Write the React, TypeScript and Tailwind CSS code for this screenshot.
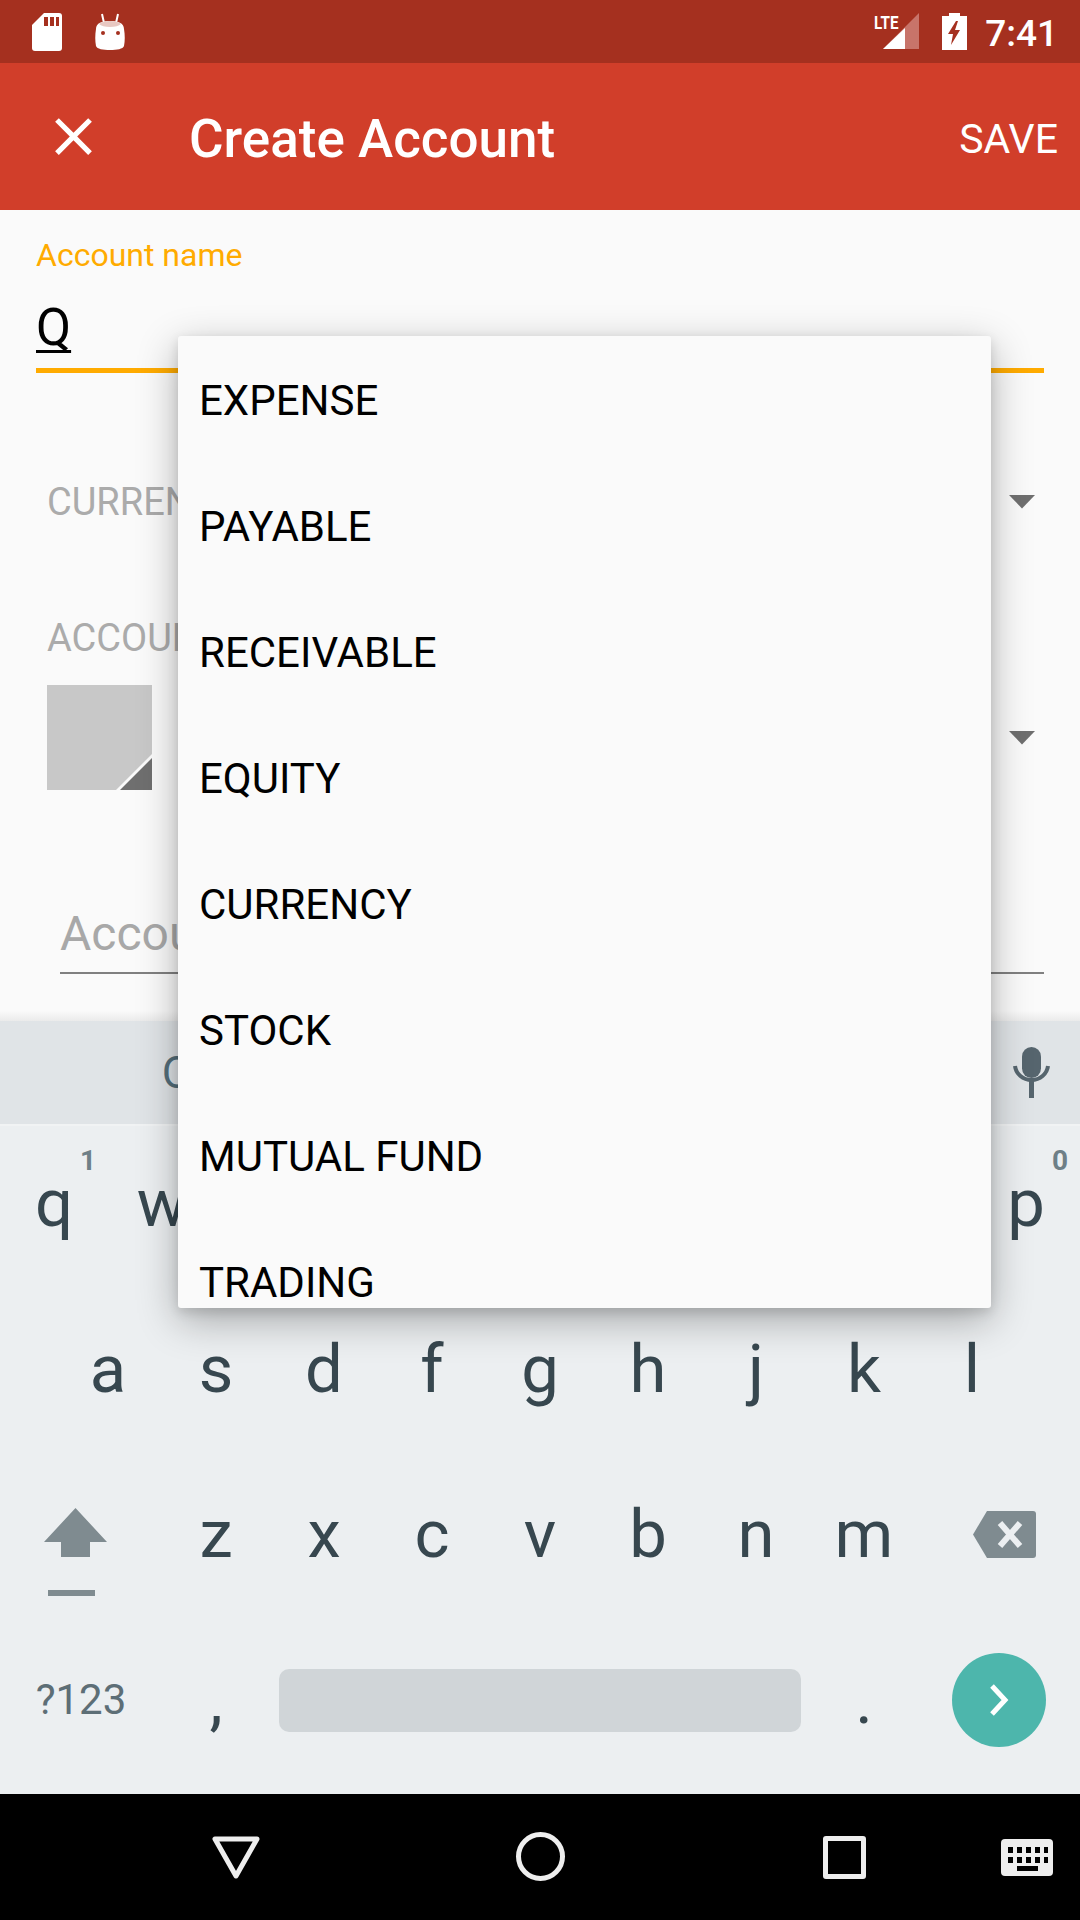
const accountTypes = ["EXPENSE", "PAYABLE", "RECEIVABLE", "EQUITY", "CURRENCY", "STOCK", "MUTUAL FUND", "TRADING"];

function KeyLetter({ label, hint }: { label: string; hint?: string }) {
  return (
    <div className="relative w-[108px] h-full flex items-center justify-center text-[67px] leading-none text-[#37474f]">
      {label}
      {hint && (
        <span className="absolute right-[12px] top-[26px] text-[28px] font-bold leading-none text-[#6e7f87]">{hint}</span>
      )}
    </div>
  );
}

function Caret() {
  return (
    <svg width="26" height="14" viewBox="0 0 26 14" className="shrink-0">
      <path d="M0 0h26L13 13.5z" fill="#6f6f6f" />
    </svg>
  );
}

function StatusBar() {
  return (
    <div className="h-[63px] bg-[#a5301f] flex items-center pl-[32px] pr-[22px] text-white">
      <svg width="30" height="38" viewBox="0 0 30 38">
        <path d="M12 0h15a3 3 0 0 1 3 3v32a3 3 0 0 1-3 3H3a3 3 0 0 1-3-3V12z" fill="#fff" />
        <path d="M12 4h4v9h-4zM18 4h4v9h-4zM24 4h3v9h-3z" fill="#a5301f" />
      </svg>
      <svg width="32" height="38" viewBox="0 0 32 38" className="ml-[32px]">
        <path d="M8 1l2 9M24 1l-2 9" stroke="#fff" strokeWidth="2" />
        <path d="M2 16c0-6 6-8 14-8s14 2 14 8c1 6 1 12 0 17-1 3-7 4-14 4s-13-1-14-4c-1-5-1-11 0-17z" fill="#fff" />
        <path d="M5 11c2-2 6-3 11-3s9 1 11 3c-2 2-6 3-11 3s-9-1-11-3z" fill="#e8c8c2" />
        <circle cx="9" cy="20" r="2" fill="#a5301f" />
        <circle cx="24" cy="20" r="2" fill="#a5301f" />
      </svg>
      <div className="ml-auto flex items-center">
        <div className="relative w-[46px] h-[38px]">
          <span className="absolute left-0 top-0 text-[19px] leading-none font-bold scale-x-[0.8] origin-left">LTE</span>
          <svg width="37" height="37" viewBox="0 0 37 37" className="absolute left-[9px] top-0">
            <path d="M36 0v36H0z" fill="#c8746a" />
            <path d="M22 15v21H0z" fill="#fff" />
          </svg>
        </div>
        <svg width="25" height="37" viewBox="0 0 25 37" className="ml-[22px]">
          <path d="M7 0h11v3h7v34H0V3h7z" fill="#fff" />
          <path d="M14 8L6 21h5l-2 11 9-15h-5l3-9z" fill="#a5301f" />
        </svg>
        <span className="ml-[18px] pt-[3px] text-[37px] font-medium leading-none">7:41</span>
      </div>
    </div>
  );
}

function AppBar() {
  return (
    <div className="h-[147px] bg-[#d13e2a] flex items-center text-white">
      <svg width="63" height="63" viewBox="0 0 24 24" fill="#fff" className="ml-[42px]">
        <path d="M19 6.41L17.59 5 12 10.59 6.41 5 5 6.41 10.59 12 5 17.59 6.41 19 12 13.41 17.59 19 19 17.59 13.41 12z" />
      </svg>
      <h1 className="ml-[84px] pt-[5px] text-[53px] font-medium leading-none">Create Account</h1>
      <span className="ml-auto mr-[22px] pt-[5px] text-[41px] leading-none">SAVE</span>
    </div>
  );
}

function Form() {
  return (
    <div className="h-[811px] bg-[#fafafa] relative">
      <div className="pt-[29px] px-[36px]">
        <label className="block text-[32px] leading-[32px] text-[#ffab00]">Account name</label>
        <div className="mt-[26px] h-[76px] border-b-[5px] border-[#ffab00] text-[51px] leading-[62px] text-black">
          <span className="underline decoration-[3px] underline-offset-[5px] [text-decoration-skip-ink:none]">Q</span>
        </div>
      </div>
      <div className="mt-[109px] pl-[47px] pr-[45px] flex items-center justify-between">
        <span className="text-[38px] leading-[40px] text-[#ababab]">CURRENCY</span>
        <Caret />
      </div>
      <div className="mt-[96px] pl-[47px] text-[38px] leading-[40px] text-[#ababab]">ACCOUNT TYPE</div>
      <div className="mt-[27px] pl-[47px] pr-[45px] flex items-center justify-between">
        <div className="relative w-[105px] h-[105px] bg-[#c8c8c8] overflow-hidden">
          <svg width="36" height="36" viewBox="0 0 36 36" className="absolute right-0 bottom-0">
            <path d="M36 0v36H0z" fill="#fafafa" />
            <path d="M36 4v32H4z" fill="#6f6f6f" />
          </svg>
        </div>
        <Caret />
      </div>
      <div className="mt-[128px] mx-[36px] ml-[60px] h-[56px] border-b-[2px] border-[#808080] text-[48px] leading-[32px] text-[#a8a8a8]">
        Account description
      </div>
      <div className="absolute left-0 right-0 bottom-0 h-[10px] bg-gradient-to-b from-transparent to-[#ebebeb]" />
    </div>
  );
}

function Keyboard() {
  return (
    <div className="h-[773px] bg-[#eceff1] flex flex-col">
      <div className="h-[105px] shrink-0 bg-[#e0e4e7] border-b-[2px] border-[#f1f3f4] flex items-center relative">
        <span className="ml-[162px] text-[44px] leading-none text-[#546e7a]">Q</span>
        <svg width="37" height="51" viewBox="0 0 37 51" className="absolute left-[1013px] top-[26px]">
          <rect x="9" y="0" width="19" height="31" rx="9.5" fill="#56656e" />
          <path d="M2 19c1 8 8 14 16.500 14S34 27 35 19" stroke="#56656e" strokeWidth="4" fill="none" />
          <rect x="16" y="33" width="5" height="18" fill="#56656e" />
        </svg>
      </div>
      <div className="flex-1 flex flex-col -mt-[5px] pb-[11px]">
        <div className="flex-1 flex">
          {"qwertyuiop".split("").map((c, i) => (
            <KeyLetter key={c} label={c} hint={i === 0 ? "1" : i === 9 ? "0" : undefined} />
          ))}
        </div>
        <div className="flex-1 flex pl-[54px]">
          {"asdfghjkl".split("").map((c) => (
            <KeyLetter key={c} label={c} />
          ))}
        </div>
        <div className="flex-1 flex">
          <div className="w-[162px] h-full flex flex-col items-center justify-center pr-[12px] pt-[35px]">
            <svg width="63" height="49" viewBox="0 0 63 49">
              <path d="M31.500 0L63 34H46v15H17V34H0z" fill="#7f8b90" />
            </svg>
            <div className="mt-[33px] mr-[8px] w-[47px] h-[6px] bg-[#7f8b90]" />
          </div>
          {"zxcvbnm".split("").map((c) => (
            <KeyLetter key={c} label={c} />
          ))}
          <div className="w-[162px] h-full flex items-center justify-end pr-[44px]">
            <svg width="63" height="47" viewBox="0 0 63 47">
              <path d="M14 0h46a3 3 0 0 1 3 3v41a3 3 0 0 1-3 3H14L0 23.500z" fill="#7f8b90" />
              <path d="M27 12l20 23M47 12L27 35" stroke="#eceff1" strokeWidth="6" />
            </svg>
          </div>
        </div>
        <div className="flex-1 flex items-center">
          <div className="w-[162px] flex justify-center text-[42px] leading-none text-[#5d6e76]">?123</div>
          <div className="w-[108px] flex justify-center text-[67px] leading-none text-[#37474f]">,</div>
          <div className="w-[540px] px-[9px]">
            <div className="h-[63px] rounded-[10px] bg-[#d0d5d8]" />
          </div>
          <div className="w-[108px] flex justify-center text-[67px] leading-none text-[#37474f]">.</div>
          <div className="w-[162px] flex justify-center">
            <div className="w-[94px] h-[94px] rounded-full bg-[#4db6ac] flex items-center justify-center">
              <svg width="20" height="32" viewBox="0 0 20 32">
                <path d="M3 2l13 14L3 30" stroke="#fff" strokeWidth="5" fill="none" />
              </svg>
            </div>
          </div>
        </div>
      </div>
    </div>
  );
}

function NavBar() {
  return (
    <div className="h-[126px] bg-black relative">
      <svg width="48" height="43" viewBox="0 0 48 43" className="absolute left-[212px] top-[42px]">
        <path d="M3 3h42L24 40z" stroke="#eeeeee" strokeWidth="5" strokeLinejoin="round" fill="none" />
      </svg>
      <div className="absolute left-[516px] top-[38px] w-[49px] h-[49px] rounded-full border-[5px] border-[#eeeeee]" />
      <div className="absolute left-[823px] top-[42px] w-[43px] h-[43px] rounded-[3px] border-[5px] border-[#eeeeee]" />
      <svg width="52" height="37" viewBox="0 0 52 37" className="absolute left-[1001px] top-[45px]">
        <rect width="52" height="37" rx="4" fill="#eeeeee" />
        <path d="M7 8h5v6H7zM16 8h5v6h-5zM25 8h5v6h-5zM34 8h5v6h-5zM43 8h4v6h-4zM7 18h5v6H7zM16 18h5v6h-5zM25 18h5v6h-5zM34 18h5v6h-5zM43 18h4v6h-4zM16 27h21v5H16z" fill="#000" />
      </svg>
    </div>
  );
}

export default function App() {
  return (
    <div className="relative w-[1080px] h-[1920px] overflow-hidden font-['Roboto',sans-serif]">
      <StatusBar />
      <AppBar />
      <Form />
      <Keyboard />
      <NavBar />
      {/* spinner popup */}
      <div className="absolute left-[178px] top-[336px] w-[813px] h-[972px] overflow-hidden rounded-[3px] bg-[#fafafa] shadow-[0_12px_40px_rgba(0,0,0,0.3),0_4px_12px_rgba(0,0,0,0.12)]">
        {accountTypes.map((t) => (
          <div key={t} className="h-[126px] pl-[21px] pt-[3px] flex items-center text-[42px] leading-none text-black">
            {t}
          </div>
        ))}
      </div>
    </div>
  );
}
